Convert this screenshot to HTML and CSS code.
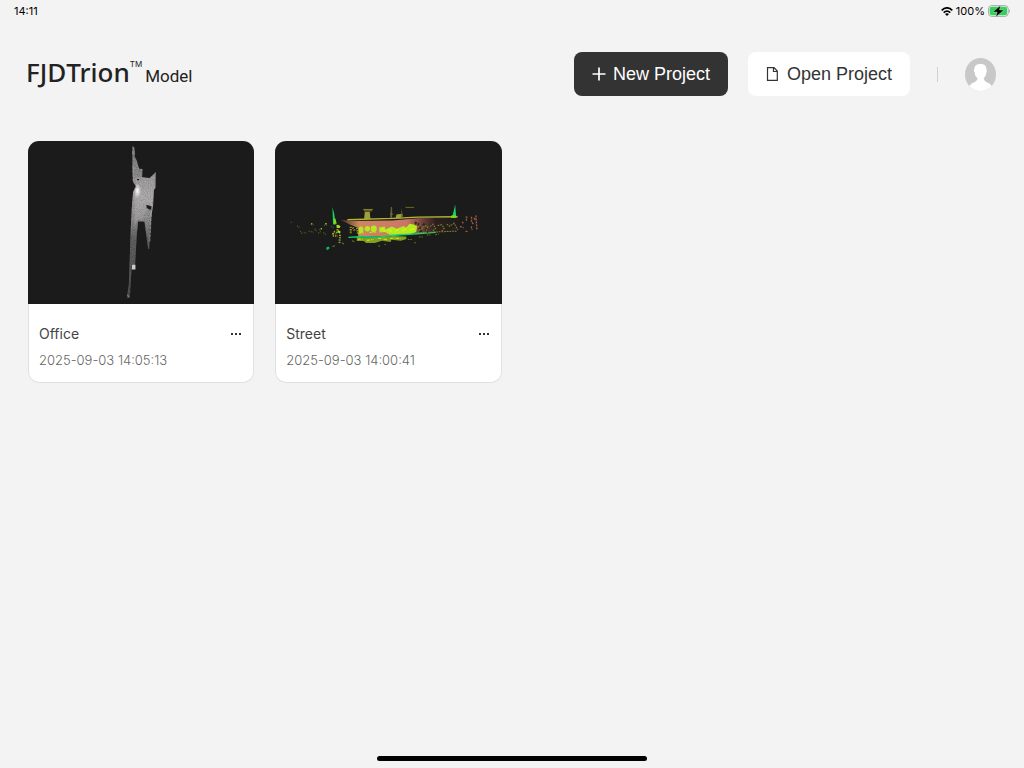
FILE: index.html
```html
<!DOCTYPE html>
<html lang="en">

<head>
	<meta charset="UTF-8">
	<meta name="viewport" content="width=device-width, initial-scale=1">
	<title>FJD Trion Model</title>
	<link rel="stylesheet" href="styles.css">
</head>

<body>
	<div class="status-bar">
		<span>14:11</span>
		<div class="status-right">
			<svg class="wifi" viewBox="0 0 36 27" aria-hidden="true">
				<path d="M2 10Q18-5 34 10M8 17Q18 8 28 17" fill="none" stroke="#000" stroke-width="5" />
				<path d="M12 21Q18 16 24 21L18 27Z" />
			</svg>
			<span>100%</span>
			<svg class="battery" viewBox="0 0 70 36" aria-hidden="true">
				<rect x="1.5" y="1.5" width="60" height="33" rx="10" fill="none" stroke="#a9a9a9" stroke-width="3" />
				<rect x="5" y="5" width="53" height="26" rx="7" fill="#34d158" />
				<path d="M64 12Q70 18 64 24Z" fill="#a9a9a9" />
				<path d="M38 1L15 21H28L24 36L48 15H35Z" stroke="#f3f3f3" stroke-width="1" />
			</svg>
		</div>
	</div>

	<header class="header">
		<h1 class="logo">
			<span class="brand">FJD</span><span class="brand">Trion</span><span class="tm">TM</span>
			<span class="product">Model</span>
		</h1>
		<div class="actions">
			<button type="button" class="btn btn-dark">
				<svg viewBox="0 0 14 14" aria-hidden="true">
					<path d="M7 .5V13.5M.5 7H13.5" fill="none" stroke="#fff" stroke-width="1.7" />
				</svg>
				New Project
			</button>
			<button type="button" class="btn btn-light">
				<svg viewBox="0 0 14 14" aria-hidden="true">
					<path d="M1.5 .7H8L11.3 4V13.3H1.5ZM7.5 .7V4.5H11.3" fill="none" stroke="#333" stroke-width="1.2" />
				</svg>
				Open Project
			</button>
			<span class="divider"></span>
			<button type="button" class="avatar" aria-label="Account">
				<svg viewBox="0 0 94 100" aria-hidden="true">
					<clipPath id="avatarClip">
						<ellipse cx="47" cy="50" rx="47" ry="50" />
					</clipPath>
					<g clip-path="url(#avatarClip)">
						<path d="M0 0H94V100H0Z" fill="#c8c8c8" />
						<path d="M13 84Q18 76 31 72Q38 69 38 61Q29 54 29 43Q25 39 28 34Q28 18 47 18Q65 18 65 34Q68 39 65 44Q64 54 57 61Q57 69 63 72Q76 76 81 84L75 100H19Z" fill="#fff" />
					</g>
				</svg>
			</button>
		</div>
	</header>

	<main class="projects">
		<article class="card">
			<svg class="thumb" viewBox="-246 9 678 489" role="img" aria-label="Office point cloud">
				<defs>
					<linearGradient id="scan" gradientUnits="userSpaceOnUse" x1="0" y1="25" x2="0" y2="480">
						<stop offset="0" stop-color="#8a8a8a" />
						<stop offset=".2" stop-color="#939393" />
						<stop offset=".33" stop-color="#b0b0b0" />
						<stop offset=".48" stop-color="#959595" />
						<stop offset=".62" stop-color="#666" />
						<stop offset="1" stop-color="#555" />
					</linearGradient>
					<radialGradient id="glow">
						<stop offset="0" stop-color="#fff" />
						<stop offset="1" stop-color="#fff" stop-opacity="0" />
					</radialGradient>
					<filter id="grain" x="0" y="0" width="1" height="1">
						<feTurbulence type="fractalNoise" baseFrequency=".3" numOctaves="2" seed="4" />
						<feColorMatrix values="0 0 0 0 0  0 0 0 0 0  0 0 0 0 0  1 0 0 0 -.3" />
						<feComposite in2="SourceAlpha" operator="in" result="noise" />
						<feMerge>
							<feMergeNode in="SourceGraphic" />
							<feMergeNode in="noise" />
						</feMerge>
					</filter>
				</defs>
				<g filter="url(#grain)">
					<path fill="url(#scan)" d="M67 25L72 27L75 47L73 55L79 66L87 92L97 93L96 118L118 120L137 102L136 150L131 155L129 201L123 240L117 333L114 332L103 250H84L80 290L75 380L65 382L60 465L59 479H50L56 440L62 270L65 210L69 160L78 146L69 132L67 90Z" />
				</g>
				<path d="M72 119L89 117L118 121L135 110L133 150L126 202L112 201L100 240L83 245L73 265L75 165L81 148Z" fill="#b8b3b2" opacity=".35" />
				<ellipse cx="82" cy="158" rx="11" ry="22" fill="url(#glow)" />
				<path d="M66 380H76V394H65Z" fill="#ccc" />
				<path d="M109 200L118 203L126 206L124 215L117 214L109 208ZM81 123H87V127H81Z" fill="#1b1b1b" />
				<path d="M68 39V48M69 84V130M125 205L119 310M52 470L57 477" fill="none" stroke="#aaa" stroke-width="2" stroke-dasharray="9 3" />
			</svg>
			<div class="card-body">
				<div class="card-title">
					<h2>Office</h2>
					<button type="button" class="more" aria-label="Office options"><i></i><i></i><i></i></button>
				</div>
				<time datetime="2025-09-03T14:05:13">2025-09-03 14:05:13</time>
			</div>
		</article>

		<article class="card">
			<svg class="thumb" viewBox="-27 -162 678 489" role="img" aria-label="Street point cloud">
				<defs>
					<linearGradient id="wall">
						<stop offset="0" stop-color="#3a2b22" />
						<stop offset=".16" stop-color="#cf8660" />
						<stop offset=".56" stop-color="#cb7565" />
						<stop offset=".7" stop-color="#6b3d36" />
						<stop offset=".8" stop-color="#2b2020" />
						<stop offset="1" stop-color="#1e1c1b" />
					</linearGradient>
				</defs>
				<path d="M168 73L198 78L325 76L410 69L520 66L525 75L518 110L400 114L325 123L222 123L222 98L200 90Z" fill="url(#wall)" />
				<!-- roof line and chimneys -->
				<path d="M190 74L325 70L400 66L520 65" fill="none" stroke="#b4b82f" stroke-width="4" />
				<path d="M242 50H257L259 72H240ZM337 58L355 56L356 70H334Z" fill="#9da13a" />
				<path d="M237 42H266L263 49H241ZM320 36H324V69H318ZM352 37L356 68H351Z" fill="#66602b" />
				<path d="M237 43H266M364 37H390M318 57H327" fill="none" stroke="#899129" stroke-width="2" />
				<!-- trees at both ends -->
				<path d="M145 36L150 54L155 88L147 88ZM513 28L516 67H500L506 58Z" fill="#16d560" />
				<path d="M149 72L154 70L158 86H149ZM502 61H516V68H500Z" fill="#83d71c" />
				<!-- foliage -->
				<g fill="#b4ea20">
					<ellipse cx="231" cy="104" rx="7" ry="10" />
					<ellipse cx="250" cy="101" rx="8" ry="8" />
					<ellipse cx="269" cy="101" rx="9" ry="10" />
					<path d="M285 97L302 94L304 103L323 94L338 101L358 93L366 98L376 86L389 88L399 94L396 111L374 119L351 116L334 120L318 119L302 111L286 112Z" />
				</g>
				<path d="M218 127L245 129L326 123L366 124L367 132L350 137L322 134L319 141L294 137L272 144L246 144L239 138H218Z" fill="#829d21" />
				<path d="M221 132H236M248 136L268 133M282 129L310 134M318 130H350M222 114H240M256 112H276" fill="none" stroke="#bce31b" stroke-width="4" stroke-dasharray="9 4 3 2" />
				<path d="M193 127L225 125L280 126L326 121L399 116L455 112" fill="none" stroke="#11d568" stroke-width="4" />
				<path d="M240 125H286M320 120L370 117" fill="none" stroke="#20d692" stroke-width="2" />
				<path d="M294 101L304 111M311 104L323 108M333 108L346 103M355 108L367 100M379 105L391 101" fill="none" stroke="#e7ee23" stroke-width="4" stroke-dasharray="5 2" />
				<!-- stray returns left of the facade -->
				<path d="M200 95V117M206 97L212 107M217 91L222 117M160 102V113M168 119L166 147M149 109L158 114M146 122H161M160 91L168 96" fill="none" stroke="#9a9d29" stroke-width="6" stroke-dasharray="4 3" />
				<path d="M157 89L168 92L167 99H158ZM163 105L170 110L167 116L160 111Z" fill="#a8dd1e" />
				<path d="M20 82H25M39 92L46 97M59 112L67 114M74 108L88 111M80 88L88 89M92 101L99 110M106 105L114 98M118 112L125 118M120 91L128 90M141 93L150 99M49 108L54 117M103 114L110 109" fill="none" stroke="#52641e" stroke-width="4" stroke-dasharray="3 3" />
				<path d="M123 86H128M81 86H85M110 101H114M144 116H150" stroke="#92b51f" stroke-width="4" />
				<path d="M127 157L133 154L137 159L132 164H127Z" fill="#13b864" />
				<path d="M145 154L153 152M174 143L180 147M204 136L211 141M282 153H288M301 148H305" fill="none" stroke="#717223" stroke-width="3" />
				<!-- dark windows and loose points on the right -->
				<path d="M391 83L404 89M405 96L411 111M416 87L426 94M425 100L432 113M438 88L447 98M450 104L461 97M465 91L478 86M476 99L488 108M493 88L502 93M505 99L516 106" fill="none" stroke="#282b1f" stroke-width="9" stroke-dasharray="7 3" />
				<path d="M389 86L402 93L408 108M412 102L422 91L431 95L426 109M438 94L447 87L454 100L446 107M460 91L472 89L480 99L473 108M488 87L496 94L510 84L515 95L522 104M400 113L520 108" fill="none" stroke="#8b842e" stroke-width="3" stroke-dasharray="5 3" />
				<path d="M544 66H548L546 78M562 65V81L568 87M575 61L578 103M569 69L574 74M561 94L564 105M527 94L538 98M544 109H552M534 80L538 86" fill="none" stroke="#9e5d40" stroke-width="4" stroke-dasharray="6 3" />
				<path d="M371 133H383M404 126H416M428 120H439M453 119L464 117M390 143H395" fill="none" stroke="#707723" stroke-width="3" stroke-dasharray="5 3" />
			</svg>
			<div class="card-body">
				<div class="card-title">
					<h2>Street</h2>
					<button type="button" class="more" aria-label="Street options"><i></i><i></i><i></i></button>
				</div>
				<time datetime="2025-09-03T14:00:41">2025-09-03 14:00:41</time>
			</div>
		</article>
	</main>

	<div class="home-indicator"></div>
</body>

</html>
```
FILE: styles.css
```css
* {
	box-sizing: border-box;
}

body {
	display: flex;
	flex-direction: column;
	min-height: 100vh;
	margin: 0;
	background-color: #f3f3f3;
	color: #222;
	font-family: Inter, "Liberation Sans", sans-serif;
}

button {
	padding: 0;
	border: none;
	background: none;
	font-family: inherit;
	cursor: pointer;
}

h1,
h2 {
	margin: 0;
	font-weight: 400;
}

.status-bar {
	display: flex;
	justify-content: space-between;
	align-items: center;
	height: 22px;
	padding: 0 13px 0 14px;
	color: #000;
	font-size: 11px;
}

.status-right {
	display: flex;
	align-items: center;
	gap: 3px;
}

.wifi {
	width: 12px;
	height: 9px;
}

.battery {
	width: 23px;
	height: 12px;
}

.header {
	display: flex;
	justify-content: space-between;
	align-items: center;
	padding: 30px 28px 0 26px;
}

.logo {
	display: flex;
	align-items: baseline;
	line-height: 32px;
}

.brand {
	font-family: "Noto Sans", sans-serif;
	font-size: 26px;
	font-weight: 500;
}

.tm {
	align-self: flex-start;
	font-size: 8px;
	line-height: 16px;
}

.product {
	margin-left: 3px;
	font-family: Roboto, sans-serif;
	font-size: 17px;
}

.actions {
	display: flex;
	align-items: center;
}

.btn {
	display: flex;
	align-items: center;
	gap: 7px;
	height: 44px;
	padding: 0 18px;
	border-radius: 8px;
	font-family: "Liberation Sans", sans-serif;
	font-size: 18px;
}

.btn svg {
	width: 14px;
	height: 14px;
}

.btn-dark {
	background-color: #333;
	color: #fff;
}

.btn-light {
	margin-left: 20px;
	background-color: #fff;
	color: #333;
}

.divider {
	width: 1px;
	height: 15px;
	margin: 0 27px;
	background-color: #d0d0d0;
}

.avatar svg {
	display: block;
	width: 31px;
	height: 33px;
}

.projects {
	display: grid;
	grid-template-columns: repeat(4, 1fr);
	gap: 21px;
	padding: 45px 28px;
}

.card {
	overflow: hidden;
	border-radius: 11px;
}

.thumb {
	display: block;
	width: 100%;
	background-color: #1b1b1b;
}

.card-body {
	padding: 20px 10px 12px;
	border: 1px solid #e0e0e0;
	border-top: none;
	border-radius: 0 0 11px 11px;
	background-color: #fff;
}

.card-title {
	display: flex;
	justify-content: space-between;
	align-items: center;
}

.card-title h2 {
	color: #444;
	font-size: 14px;
	line-height: 20px;
}

.more {
	display: flex;
	align-items: center;
	gap: 2px;
	height: 20px;
	padding: 0 2px;
}

.more i {
	width: 2px;
	height: 2px;
	background-color: #333;
}

.card time {
	display: block;
	margin-top: 6px;
	color: #666;
	font-size: 13px;
	font-weight: 300;
	line-height: 20px;
}

.home-indicator {
	width: 270px;
	height: 5px;
	margin: auto auto 7px;
	border-radius: 3px;
	background-color: #000;
}
```
